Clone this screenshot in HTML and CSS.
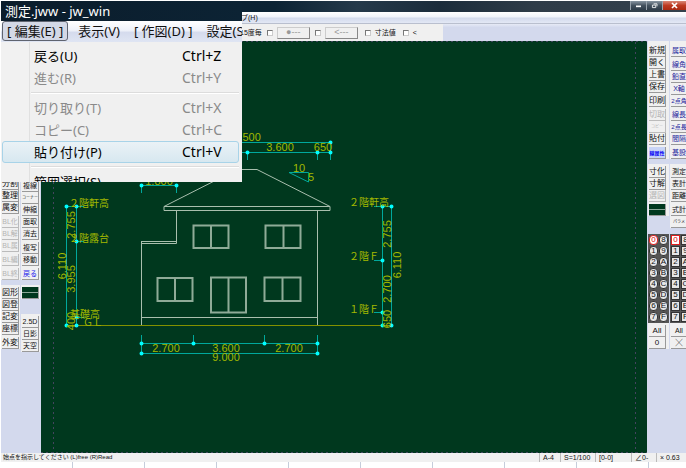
FILE: index.html
```html
<!DOCTYPE html>
<html lang="ja">
<head>
<meta charset="utf-8">
<title>測定.jww - jw_win</title>
<link rel="stylesheet" href="styles.css">
</head>
<body>
<div class="app">
  <header class="titlebar">
    <div class="window-buttons">
      <button class="win" aria-label="最小化"><svg viewBox="0 0 18 9"><path d="M6 5.500h6" stroke="#fff" stroke-width="2"/></svg></button>
      <button class="win" aria-label="元に戻す"><svg viewBox="0 0 18 9"><path d="M8 2.500h4v3M6.500 4h4v3h-4z" stroke="#fff" fill="none"/></svg></button>
      <button class="win close" aria-label="閉じる"><svg viewBox="0 0 22 9"><path d="M8.500 2l5 5M13.500 2l-5 5" stroke="#fff" stroke-width="1.700"/></svg></button>
    </div>
  </header>
  <nav class="menubar"><button>プ(H)</button></nav>
  <div class="toolbar">
    <div class="options">
      <label>15度毎</label>
      <input type="checkbox" aria-label="端点"><button class="opt" disabled>●---</button>
      <input type="checkbox" aria-label="矢印"><button class="opt" disabled>&lt;---</button>
      <label class="wide"><input type="checkbox">寸法値</label>
      <label class="wide"><input type="checkbox">&lt;</label>
    </div>
  </div>
  <main class="work">
    <aside class="tools">
      <div class="col left-first">
        <div class="group covered"><button>分割</button><button>整理</button><button>属変</button></div>
        <div class="group"><button disabled>BL化</button><button disabled>BL解</button><button disabled>BL属</button></div>
        <div class="group"><button disabled>BL編</button></div>
        <div class="group"><button disabled>BL終</button></div>
        <div class="group ruled"><button>図形</button><button>図登</button><button>記変</button><button>座標</button></div>
        <div class="group"><button>外変</button></div>
      </div>
      <div class="col left-second">
        <div class="group covered"><button>複線</button><button class="tiny">コーナー</button><button>伸縮</button><button>面取</button><button>消去</button></div>
        <div class="group"><button>複写</button><button>移動</button></div>
        <div class="group"><button class="blue">戻る</button></div>
        <div class="group ruled"><button class="line-style" aria-label="線属性"></button></div>
        <div class="spacer"></div>
        <div class="group"><button>2.5D</button><button>日影</button><button>天空</button></div>
      </div>
    </aside>
    <section class="canvas">
      <svg class="drawing" viewBox="41 41 606 412" preserveAspectRatio="xMinYMin meet">
        <g class="frame">
          <path d="M41 41.500H647M53.500 42V453M635.500 42V453M41 452.500H647"/>
        </g>
        <g class="house">
          <path d="M164 206.500L237 169.500H257L330 206.500V210.500H164zM164 206.500H330"/>
          <path d="M176.500 211V243.500H141.500M141.500 241.500H176M141.500 241V325M141 317.500H317.500M317.500 211V325"/>
          <path class="pane" d="M193.500 225.500h35v22.500h-35zM211 225.500v22.500M265.500 225.500h35v22.500h-35zM283.500 225.500v22.500M157.500 278h35v23h-35zM175 278v23M211 277.500h35v35h-35zM228.500 277.500v35M264.500 277.500h36v23.500h-36zM282.500 277.500v23.500"/>
        </g>
        <g class="dim">
          <path d="M141 142.500H330.500V160M241 152.500H330M247.500 152V160M317.500 152V160"/>
          <path d="M289 172.500H308.500V182z"/>
          <path d="M141.500 193V185.500H176.500V193"/>
          <path d="M66.500 325.500V206.500H76.500V325.500zM76 206.500h8M76 241.500h8M76 317.500h8"/>
          <path d="M382.500 206.500V325.500H391.500V206.500zM382 206.500h-8M382 260.500h-8M382 312.500h-8"/>
          <path d="M141.500 335V353.500H317.500V335M141 343.500H317M193.500 335v8M264.500 335v8"/>
        </g>
        <path class="ground" d="M66 325.500H392"/>
        <path class="dots" d="M330.500 142.500h0M247.500 152.500h0M317.500 152.500h0M330.500 152.500h0M141.500 185.500h0M176.500 185.500h0M66.500 206.500h0M76.500 206.500h0M76.500 241.500h0M76.500 317.500h0M66.500 325.500h0M76.500 325.500h0M382.500 206.500h0M391.500 206.500h0M382.500 260.500h0M382.500 312.500h0M382.500 325.500h0M391.500 325.500h0M141.500 343.500h0M193.500 343.500h0M264.500 343.500h0M317.500 343.500h0M141.500 353.500h0M317.500 353.500h0"/>
        <g class="num">
          <text x="244" y="141">10.500</text>
          <text x="280" y="151">3.600</text>
          <text x="323" y="151">650</text>
          <text x="299" y="172">10</text>
          <text x="311" y="181">5</text>
          <text x="159" y="185">1.800</text>
          <text x="166" y="352">2.700</text>
          <text x="226" y="352">3.600</text>
          <text x="289" y="352">2.700</text>
          <text x="226" y="361">9.000</text>
          <text transform="translate(75 225) rotate(-90)">2.755</text>
          <text transform="translate(75 279) rotate(-90)">3.955</text>
          <text transform="translate(75 321) rotate(-90)">400</text>
          <text transform="translate(66 266) rotate(-90)">6.110</text>
          <text transform="translate(391 234) rotate(-90)">2.755</text>
          <text transform="translate(391 289) rotate(-90)">2.700</text>
          <text transform="translate(391 319) rotate(-90)">650</text>
          <text transform="translate(401 265) rotate(-90)">6.110</text>
        </g>
        <g class="level">
          <text x="69" y="207">２階軒高</text>
          <text x="69" y="242">２階露台</text>
          <text x="70" y="318">基礎高</text>
          <text x="83" y="326">ＧＬ</text>
          <text x="349" y="206">２階軒高</text>
          <text x="349" y="260">２階Ｆ</text>
          <text x="349" y="313">１階Ｆ</text>
        </g>
      </svg>
    </section>
    <aside class="tools">
      <div class="col right-first">
        <div class="group"><button>新規</button><button>開く</button><button>上書</button><button>保存</button></div>
        <div class="group"><button>印刷</button></div>
        <div class="group"><button disabled>切取</button><button class="tiny" disabled>コピー</button><button>貼付</button></div>
        <div class="group"><button class="pressed">線属性</button></div>
        <div class="group ruled"><button>寸化</button><button>寸解</button><button disabled>選図</button></div>
        <div class="group"><button class="line-style" aria-label="線属性"></button></div>
        <div class="spacer"></div>
        <div class="layers">
          <button class="current">0</button><button>8</button><button>1</button><button>9</button><button>2</button><button>A</button><button>3</button><button>B</button><button>4</button><button>C</button><button>5</button><button>D</button><button>6</button><button>E</button><button>7</button><button>F</button>
        </div>
        <div class="group all"><button>All</button><button>0</button></div>
      </div>
      <div class="col right-second">
        <div class="group"><button>属取</button></div>
        <div class="group"><button>線角</button><button>鉛直</button><button>X軸</button><button class="small">2点角</button></div>
        <div class="group"><button>線長</button><button class="small">2点長</button><button>間隔</button></div>
        <div class="group"><button>基設</button></div>
        <div class="group ruled dark"><button>測定</button><button>表計</button><button>距離</button></div>
        <div class="group dark"><button>式計</button><button class="tiny">パラメ</button></div>
        <div class="spacer"></div>
        <div class="layers groups">
          <button class="current">0</button><button>8</button><button>1</button><button>9</button><button>2</button><button>A</button><button>3</button><button>B</button><button>4</button><button>C</button><button>5</button><button>D</button><button>6</button><button>E</button><button>7</button><button>F</button>
        </div>
        <div class="group all dark"><button>All</button><button>╳</button></div>
      </div>
    </aside>
  </main>
  <footer class="status">
    <span class="message">始点を指示してください (L)free (R)Read</span>
    <span class="paper">A-4</span><span class="scale">S=1/100</span><span class="layer-no">[0-0]</span><span class="angle">∠0-</span><span class="zoom">× 0.63</span>
  </footer>
  <div class="sheet"></div>
</div>
<div class="popup">
  <div class="popup-title">測定.jww - jw_win</div>
  <div class="popup-menubar">
    <button class="open">[ 編集(E) ]</button><button>表示(V)</button><button>[ 作図(D) ]</button><button>設定(S)</button>
  </div>
  <div class="dropdown">
    <button><span>戻る(U)</span><kbd>Ctrl+Z</kbd></button>
    <button disabled><span>進む(R)</span><kbd>Ctrl+Y</kbd></button>
    <hr>
    <button disabled><span>切り取り(T)</span><kbd>Ctrl+X</kbd></button>
    <button disabled><span>コピー(C)</span><kbd>Ctrl+C</kbd></button>
    <button class="selected"><span>貼り付け(P)</span><kbd>Ctrl+V</kbd></button>
    <hr>
    <button><span>範囲選択(S)</span></button>
  </div>
</div>
</body>
</html>
```
FILE: styles.css
```css
* { box-sizing: border-box; }
body {
  margin: 0;
  background: #fff;
  font-family: "Liberation Sans", "Noto Sans CJK JP", sans-serif;
  color: #111;
  overflow: hidden;
}
button { font: inherit; color: inherit; margin: 0; padding: 0; border: 0; background: none; white-space: nowrap; }

.app { display: flex; flex-direction: column; height: 100vh; padding: 1px 0 0 1px; }

.titlebar {
  flex: none;
  height: 11px;
  display: flex;
  justify-content: flex-end;
  background: linear-gradient(90deg, #0c1d2c 0%, #0c2334 40%, #25394a 52%, #1b2c3b 64%, #2f3c48 78%, #34414d 100%);
}
.window-buttons { display: flex; height: 9px; }
.win { width: 16px; height: 9px; background: linear-gradient(#8996a2, #44525f 50%, #2e3c49); border-left: 1px solid #98a2ac; }
.win svg { display: block; width: 100%; height: 9px; }
.win.close { width: 24px; background: linear-gradient(#d98878, #bd3a22 50%, #a92a14); }

.menubar {
  flex: none;
  height: 12px;
  display: flex;
  align-items: center;
  padding-left: 240px;
  font-size: 7px;
  line-height: 10px;
  background: linear-gradient(#fff, #f0f3fa 45%, #d3daec 55%, #e3e8f5);
  border-bottom: 1px solid #b9bfce;
}
.toolbar { flex: none; height: 17px; background: linear-gradient(#e6eaf6 0, #d3d9ed 20%, #d3d9ed); }
.options {
  width: 442px;
  height: 17px;
  display: flex;
  align-items: center;
  gap: 4px;
  padding-left: 239px;
  font-size: 7px;
  line-height: 10px;
  background: #f0f0f0;
}
.options label { display: flex; align-items: center; gap: 4px; white-space: nowrap; }
.options label.wide { margin-left: 2px; }
.options input {
  appearance: none;
  width: 6px;
  height: 6px;
  margin: 0 0 0 1px;
  background: #fff;
  border: 1px solid #888;
  border-color: #777 #ccc #ccc #777;
}
.opt {
  width: 33px;
  height: 12px;
  color: #999;
  font-size: 9px;
  line-height: 9px;
  border: 1px solid #999;
  border-color: #ccc #888 #888 #ccc;
}

.work { flex: 1; min-height: 0; display: flex; }
.tools { flex: none; display: flex; gap: 1px; background: #d3d9ed; overflow: hidden; }
.tools:first-child { width: 40px; }
.tools:last-child { width: 39px; padding-left: 1px; }
.col { flex: none; width: 19px; display: flex; flex-direction: column; font-size: 8px; line-height: 10px; }
.tools:last-child .col { width: 21px; }
.group { flex: none; display: flex; flex-direction: column; padding: 2px 1px 0; background: #f0f0f0; }
.group.ruled { border-top: 5px solid #d3d9ed; }
.group button {
  height: 12px;
  width: 17px;
  display: flex;
  align-items: center;
  justify-content: center;
  border-right: 1px solid #999;
  border-bottom: 1px solid #999;
}
.group button:disabled { color: #b4b4b4; border-color: #bbb; }
.left-first button:disabled { font-size: 7px; }
.left-second .group { font-size: 7px; }
.group .small { font-size: 6px; }
.group .tiny { font-size: 4px; }
.group .blue { color: #1a1aee; }
.group .pressed { color: #0000f5; background: #c8d4f6; font-size: 5px; font-weight: bold; }
.group .line-style {
  height: 12px;
  background: linear-gradient(#00381e 5px, #8ba698 5px, #8ba698 6px, #00381e 6px);
}
.left-first .covered { padding-top: 137px; }
.left-second .covered { padding-top: 139px; }
.left-second .spacer { height: 15px; }
.right-first, .right-second { padding-top: 2px; background: linear-gradient(#f0f0f0 8px, transparent 8px); }
.right-second { color: #1c1c9c; }
.right-second .group { font-size: 7px; }
.right-first .spacer { height: 18px; }
.right-second .spacer { height: 6px; }
.right-second .dark, .right-second .layers { color: #111; }
.layers {
  flex: none;
  display: grid;
  grid-template-columns: 9px 9px;
  grid-auto-rows: 10px;
  gap: 1px;
  padding: 1px;
  background: #555;
  font-size: 8px;
}
.layers button { border: 1px solid #333; background: #e6e6e6; line-height: 8px; text-align: center; }
.layers:not(.groups) button { border-radius: 4px; }
.col .layers .current { border-color: #e02020; color: #d00; background: #fff; }

.canvas { flex: 1; min-width: 0; background: #00381e; }
.drawing { display: block; width: 100%; height: 100%; }
.drawing path { fill: none; }
.frame path { stroke: #43445f; stroke-dasharray: 2 3; }
.ground { stroke: #839000; }
.house path { stroke: #a9bfae; }
.house .pane { stroke: #8fab98; stroke-width: 2; }
.dim path { stroke: #00a89c; }
.drawing .dots { stroke: #0ff; stroke-width: 4; stroke-linecap: round; }
.num text { fill: #a3b800; font-size: 11px; text-anchor: middle; }
.level text { fill: #a3b800; font-family: "Noto Sans CJK JP", sans-serif; font-size: 10px; }

.status {
  flex: none;
  height: 9px;
  display: flex;
  background: #f0f0f0;
  font-size: 7px;
  line-height: 9px;
  white-space: nowrap;
  padding-left: 2px;
}
.message { flex: 1; font-size: 6px; }
.status span:not(.message) { padding-left: 3px; border-left: 1px solid #bbb; }
.status .paper { width: 21px; border-color: transparent; }
.status .scale { width: 35px; }
.status .layer-no { width: 36px; }
.status .angle { width: 25px; }
.status .zoom { width: 30px; }
.sheet {
  flex: none;
  height: 6px;
  background: repeating-linear-gradient(90deg, #fff 0, #fff 71px, #c6cddb 71px, #c6cddb 72px);
}

.popup {
  position: absolute;
  left: 1px;
  top: 1px;
  width: 241px;
  height: 181px;
  overflow: hidden;
  background: #f0f0f0;
  font-family: "Noto Sans", "Noto Sans CJK JP", sans-serif;
  font-size: 13px;
  line-height: 20px;
}
.popup-title { height: 20px; padding-left: 4px; color: #fff; background: linear-gradient(90deg, #0b1c2b, #0c2334); }
.popup-menubar {
  height: 21px;
  display: flex;
  gap: 6px;
  background: linear-gradient(#fff, #eef1f9 45%, #d5dbed 55%, #dfe5f3);
}
.popup-menubar button { flex: none; height: 20px; padding: 0 4px; line-height: 18px; }
.popup-menubar .open { margin-left: 1px; border: 1px solid #5f6470; border-radius: 3px; background: #d3d8e6; }
.dropdown {
  display: flex;
  flex-direction: column;
  padding: 3px 3px 0 1px;
  background: linear-gradient(90deg, #f1f1f1 28px, #e0e0e0 28px, #e0e0e0 29px, #f0f0f0 29px);
}
.dropdown button {
  flex: none;
  height: 22px;
  padding: 0 16px 0 31px;
  display: flex;
  align-items: center;
  justify-content: space-between;
  border: 1px solid transparent;
  border-radius: 3px;
  color: #000;
}
.dropdown button:disabled { color: #8a8a8a; }
.dropdown .selected { border-color: #a8d3e8; background: linear-gradient(#eaf2f6, #d7e8f0); }
.dropdown kbd { font: inherit; font-size: 14px; width: 40px; text-align: left; }
.dropdown hr { flex: none; width: auto; height: 2px; margin: 3px 0 3px 29px; border: 0; background: #dcdcdc; border-bottom: 1px solid #fff; }
```
